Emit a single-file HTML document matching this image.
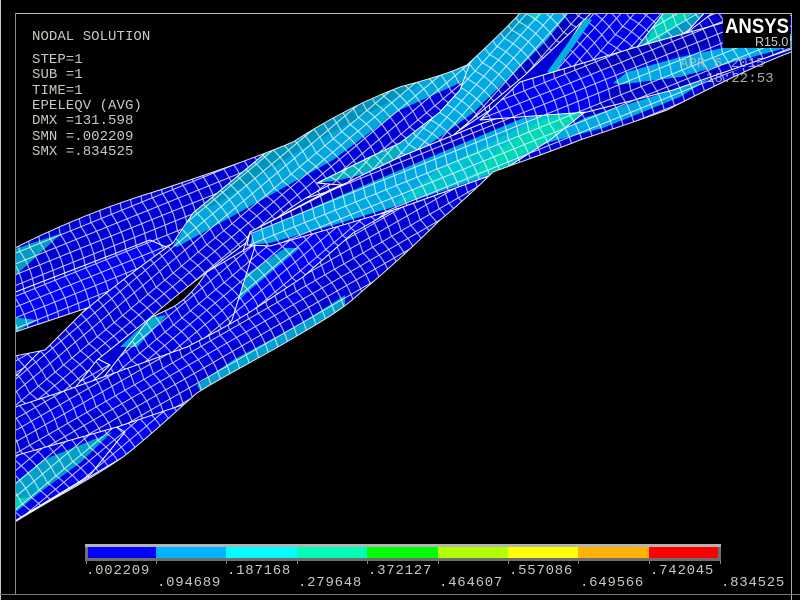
<!DOCTYPE html>
<html>
<head>
<meta charset="utf-8">
<style>
html,body{margin:0;padding:0;background:#000;width:800px;height:600px;overflow:hidden}
svg{display:block}
text{font-family:"Liberation Mono",monospace;font-size:14px;fill:#c9c8be;letter-spacing:.05px}
.b text{letter-spacing:.75px}
</style>
</head>
<body>
<svg width="800" height="600" viewBox="0 0 800 600" xmlns="http://www.w3.org/2000/svg">
<defs>
<pattern id="m22" width="11" height="40" patternUnits="userSpaceOnUse" patternTransform="rotate(-22)"><path d="M0 .5H11M0 10.500H11M0 20.500H11M0 30.500H11M1,0Q6,20 1,40" stroke="#fff" stroke-opacity=".8" fill="none"/></pattern>
<pattern id="m30" width="11" height="40" patternUnits="userSpaceOnUse" patternTransform="rotate(-30)"><path d="M0 .5H11M0 10.500H11M0 20.500H11M0 30.500H11M1,0Q6,20 1,40" stroke="#fff" stroke-opacity=".8" fill="none"/></pattern>
<pattern id="m40" width="11" height="40" patternUnits="userSpaceOnUse" patternTransform="rotate(-40)"><path d="M0 .5H11M0 10.500H11M0 20.500H11M0 30.500H11M1,0Q6,20 1,40" stroke="#fff" stroke-opacity=".8" fill="none"/></pattern>
<pattern id="m48" width="11" height="40" patternUnits="userSpaceOnUse" patternTransform="rotate(-48)"><path d="M0 .5H11M0 10.500H11M0 20.500H11M0 30.500H11M1,0Q6,20 1,40" stroke="#fff" stroke-opacity=".8" fill="none"/></pattern>
<clipPath id="cp"><rect x="16" y="14" width="775" height="580"/></clipPath>
<path id="tI" d="M625,60L663,5H712L670,50L640,70Z"/>
<path id="tJ" d="M680,38L723,5H800V60L700,75Z"/>
<path id="tH" d="M545,80L593,5H670L630,56L570,85Z"/>
<path id="tA" d="M0,240L293,130L480,50L490,110L400,170L300,200L180,265L0,315Z"/>
<path id="tB" d="M0,298L150,240L200,262L87,308L0,340Z"/>
<path id="tP" d="M0,350L60,340L110,365L40,430L0,430Z"/>
<path id="tC" d="M0,395C40,345 100,295 173,243L193,213L233,180L293,130L400,80L480,50L490,95L445,125L400,150C360,170 300,195 267,227L207,272L150,318L97,360L75,388L0,430Z"/>
<path id="tD" d="M317,183L370,157L400,143L440,112L460,90L470,63L520,5H600L525,75L445,142L400,170L340,185Z"/>
<path id="tK" d="M225,300L250,232L330,190L400,160L500,140L500,220L400,290L300,320L230,350Z"/>
<path id="tN" d="M90,395L150,318L207,272L256,243L232,320L180,390Z"/>
<path id="tG" d="M460,210L493,160L583,113L680,85L800,40V70L667,140L500,190Z"/>
<path id="tE" d="M247,245L250,232C290,212 340,185 400,157L483,123L530,108L590,108L550,140L500,172L400,208C360,220 310,235 270,246Z"/>
<path id="tF" d="M480,120L520,82L633,48L733,20L800,10V46L673,90L587,112L533,116Z"/>
<path id="tZ" d="M0,530L123,457L220,380L120,420L0,480Z"/>
<path id="tM" d="M0,448L117,427L125,432L90,475L0,530Z"/>
<path id="tL" d="M0,412L67,390L187,347C210,335 235,322 253,310L303,277L353,233L420,195L490,160L510,175L470,215L400,300L300,370L197,400L117,427L0,460Z"/>
</defs>

<rect width="800" height="600" fill="#000"/>

<g clip-path="url(#cp)" stroke-linejoin="round">
<rect x="0" y="0" width="800" height="600" fill="#0000d8"/>
<!-- far back -->
<use href="#tI" fill="#0096c8"/>
<path d="M663,5H705L655,42L645,45Z" fill="#00d0bc"/>
<use href="#tI" fill="url(#m30)" stroke="#fff"/>
<use href="#tJ" fill="#0000d0"/><use href="#tJ" fill="url(#m22)" stroke="#fff"/>
<use href="#tH" fill="#0000f0"/><use href="#tH" fill="url(#m48)" stroke="#fff"/>
<path d="M547,72L586,18L592,20L554,74Z" fill="#00b0e0"/>

<!-- upper-left tube -->
<use href="#tA" fill="#0000d4"/>
<path d="M0,254L62,233L0,290Z" fill="#009cc4"/>
<use href="#tA" fill="url(#m22)" stroke="#fff"/>
<use href="#tB" fill="#0000f4"/>
<path d="M0,316L38,320L0,340Z" fill="#00a4d0"/>
<use href="#tB" fill="url(#m22)" stroke="#fff"/>
<use href="#tP" fill="#0000dc"/><use href="#tP" fill="url(#m30)" stroke="#fff"/>

<use href="#tC" fill="#0000dc"/>
<path d="M173,246L193,213L233,180L293,130L400,80L480,50L480,78L462,82L400,110L333,160L267,197L177,247Z" fill="#00a6dc"/>
<path d="M193,213L233,180L293,136L400,83L420,85L300,150L215,205Z" fill="#0094bc"/>
<use href="#tC" fill="url(#m40)" stroke="#fff"/>

<use href="#tD" fill="#0000c0"/>
<path d="M317,183L370,157L400,143L440,112L460,90L470,63L520,5H575L547,40L520,67L473,113L440,137L400,165L340,180Z" fill="#00a8e4"/>
<path d="M495,33L520,5H548L530,22L505,40Z" fill="#0098c8"/>
<path d="M525,5H552L535,22Z" fill="#00d0c8"/>
<path d="M317,183L370,157L400,143L398,160L340,180Z" fill="#00b0c0"/>
<use href="#tD" fill="url(#m48)" stroke="#fff"/>

<!-- wedge under long tube -->
<use href="#tK" fill="#0000f8"/>
<path d="M232,307L238,280L285,248L300,248L250,290Z" fill="#00a0d0"/>
<use href="#tK" fill="url(#m40)" stroke="#fff"/>
<use href="#tN" fill="#0000e4"/>
<path d="M120,347L150,318L167,315L137,347Z" fill="#00a8d4"/>
<use href="#tN" fill="url(#m40)" stroke="#fff"/>

<!-- lower right strip -->
<use href="#tG" fill="#0000d0"/>
<path d="M525,152L540,140L587,117L673,90L720,72L680,97L603,128L550,142Z" fill="#00a8e4"/>
<use href="#tG" fill="url(#m22)" stroke="#fff"/>

<!-- lower-left bundle -->
<use href="#tZ" fill="#0000f4"/><use href="#tZ" fill="url(#m40)" stroke="#fff"/>
<use href="#tM" fill="#0000e8"/>
<path d="M0,495L43,460L100,437L112,432L80,463L43,490L0,525Z" fill="#00a0c8"/>
<path d="M0,500L30,497L0,525Z" fill="#00d0b8"/>
<use href="#tM" fill="url(#m40)" stroke="#fff"/>

<!-- big lower tube -->
<use href="#tL" fill="#0000d4"/>
<path d="M197,385L233,360L300,324L345,295L345,320L300,345L205,400Z" fill="#00a0d0"/>
<path d="M0,428L67,402L187,358L280,305L350,245L300,300L220,355L117,405L0,440Z" fill="#0000ea"/>
<use href="#tL" fill="url(#m30)" stroke="#fff"/>

<!-- long cyan tube -->
<use href="#tE" fill="#0000c8"/>
<path d="M250,245L253,233L300,213L400,170L440,153L523,118L590,108L550,140L500,172L400,205L330,226L270,243Z" fill="#00a8e4"/>
<path d="M395,205L440,168L483,147L537,118L590,108L550,140L500,170L440,190Z" fill="#00c4d0"/>
<path d="M465,180L500,150L537,122L590,108L550,140L500,166Z" fill="#00d8b8"/>
<use href="#tE" fill="url(#m22)" stroke="#fff"/>

<!-- upper right tube -->
<use href="#tF" fill="#0000f4"/>
<path d="M520,82L633,48L733,20L800,10V26L700,50L617,70L540,77Z" fill="#0000bc"/>
<path d="M613,83L627,72L680,57L800,32V46L690,77L640,88Z" fill="#00a8e4"/>
<path d="M617,85L680,77L800,44V50L673,90L600,108L587,112Z" fill="#0000c8"/>
<use href="#tF" fill="url(#m22)" stroke="#fff"/>

<!-- silhouette masks -->
<path d="M0,0H530L520,13C505,30 485,48 467,65C445,75 425,80 400,87C365,100 330,118 293,142C250,160 205,175 160,190C110,205 60,225 15,248L0,256Z" fill="#000" stroke="#e6e6e6"/>
<path d="M0,532L15,522C50,500 90,480 123,457C150,436 175,412 197,393C225,375 260,358 290,340C315,325 340,312 360,293C385,272 415,245 440,220C455,208 480,185 493,172C520,162 550,152 580,140C610,130 640,120 667,110C710,88 750,68 791,52L800,48V600H0Z" fill="#000" stroke="#e6e6e6"/>
<!-- gaps -->
<path d="M0,337L15,332L87,308L45,350L15,356L0,358Z" fill="#000" stroke="#e6e6e6"/>
<path d="M150,318C170,300 190,285 207,272C195,290 185,300 173,307Z" fill="#000" stroke="#e6e6e6"/>
</g>

<rect x="0" y="0" width="1" height="600" fill="#c8c8c8"/>
<rect x="15" y="13" width="776" height="1" fill="#bbb"/>
<rect x="15" y="13" width="1" height="581" fill="#8a8a8a"/>
<rect x="791" y="13" width="1" height="587" fill="#aaa"/>
<rect x="0" y="594" width="800" height="1" fill="#777"/>

<!-- annotations -->
<text x="32" y="40">NODAL SOLUTION</text>
<text x="32" y="63">STEP=1</text>
<text x="32" y="78">SUB =1</text>
<text x="32" y="94">TIME=1</text>
<text x="32" y="109">EPELEQV  (AVG)</text>
<text x="32" y="124">DMX =131.598</text>
<text x="32" y="140">SMN =.002209</text>
<text x="32" y="155">SMX =.834525</text>

<text x="680" y="67" opacity=".75">APR  6 2015</text>
<text x="706" y="82" opacity=".85">18:22:53</text>

<!-- logo -->
<rect x="723" y="14" width="67" height="34" fill="#000"/>
<text x="725" y="33" textLength="64" lengthAdjust="spacingAndGlyphs" style="font-family:'Liberation Sans',sans-serif;font-size:21px;font-weight:700;fill:#fff;letter-spacing:0">ANSYS</text>
<text x="755" y="46" style="font-family:'Liberation Sans',sans-serif;font-size:12.500px;fill:#ccc;letter-spacing:0">R15.0</text>

<!-- colour bar -->
<rect x="85" y="544" width="636" height="17" fill="#b4b4b4"/>
<path d="M85,561V544H88V558H718V544H721V561Z" fill="#6e6e6e"/>
<rect x="85" y="544" width="636" height="3" fill="#b4b4b4"/>
<rect x="88" y="547" width="68" height="11" fill="#0000ff"/>
<rect x="156" y="547" width="70" height="11" fill="#00b2ff"/>
<rect x="226" y="547" width="71" height="11" fill="#00ffff"/>
<rect x="297" y="547" width="70" height="11" fill="#00ffb2"/>
<rect x="367" y="547" width="71" height="11" fill="#00ff00"/>
<rect x="438" y="547" width="70" height="11" fill="#b2ff00"/>
<rect x="508" y="547" width="70" height="11" fill="#ffff00"/>
<rect x="578" y="547" width="71" height="11" fill="#ffb200"/>
<rect x="649" y="547" width="69" height="11" fill="#ff0000"/>
<path d="M86.500,561V564M156.500,561V564M226.500,561V564M297.500,561V564M367.500,561V564M438.500,561V564M508.500,561V564M578.500,561V564M649.500,561V564M720.500,561V564" stroke="#888" fill="none"/>

<g class="b">
<text x="86" y="574">.002209</text>
<text x="157" y="586">.094689</text>
<text x="227" y="574">.187168</text>
<text x="298" y="586">.279648</text>
<text x="368" y="574">.372127</text>
<text x="439" y="586">.464607</text>
<text x="509" y="574">.557086</text>
<text x="580" y="586">.649566</text>
<text x="650" y="574">.742045</text>
<text x="721" y="586">.834525</text>
</g>
</svg>
</body>
</html>
